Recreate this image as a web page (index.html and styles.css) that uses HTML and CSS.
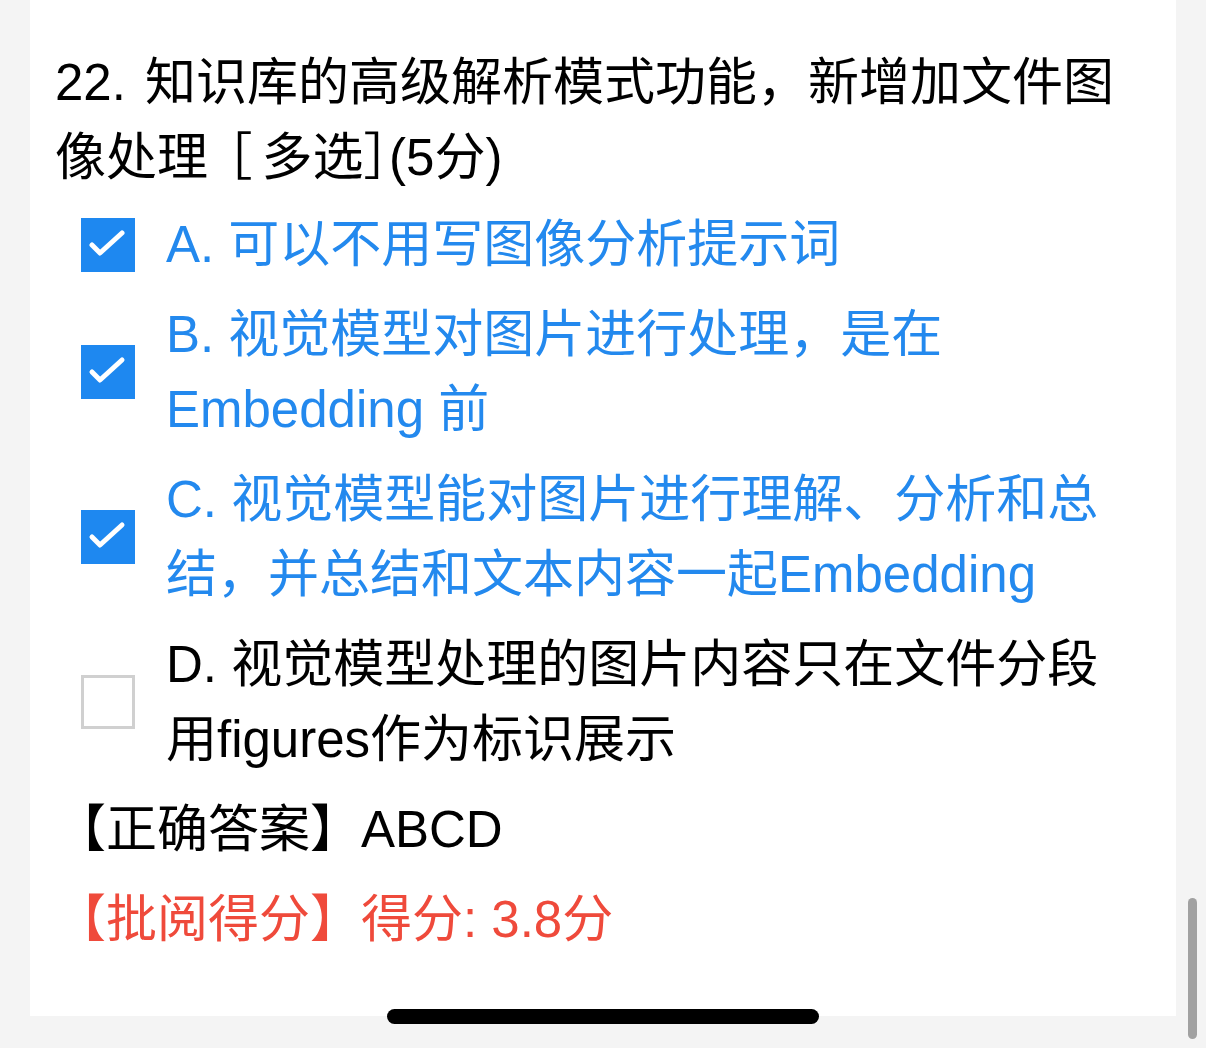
FILE: index.html
```html
<!DOCTYPE html>
<html lang="zh-CN">
<head>
<meta charset="utf-8">
<title>多选题</title>
<link rel="stylesheet" href="styles.css">
</head>
<body>
<div class="page">
  <div class="card">
    <div class="question"><span class="num">22.</span> 知识库的高级解析模式功能，新增加文件图像处理<span class="bl">［</span>多选<span class="br">］</span>(5分)</div>
    <div class="options">
      <div class="option checked">
        <span class="box"><svg viewBox="0 0 54 54" width="54" height="54"><path d="M11 27 L19 35 L41 15" fill="none" stroke="#fff" stroke-width="5" stroke-linecap="round" stroke-linejoin="round"/></svg></span>
        <span class="label">A. 可以不用写图像分析提示词</span>
      </div>
      <div class="option checked">
        <span class="box"><svg viewBox="0 0 54 54" width="54" height="54"><path d="M11 27 L19 35 L41 15" fill="none" stroke="#fff" stroke-width="5" stroke-linecap="round" stroke-linejoin="round"/></svg></span>
        <span class="label">B. 视觉模型对图片进行处理，是在Embedding 前</span>
      </div>
      <div class="option checked">
        <span class="box"><svg viewBox="0 0 54 54" width="54" height="54"><path d="M11 27 L19 35 L41 15" fill="none" stroke="#fff" stroke-width="5" stroke-linecap="round" stroke-linejoin="round"/></svg></span>
        <span class="label">C. 视觉模型能对图片进行理解、分析和总结，并总结和文本内容一起Embedding</span>
      </div>
      <div class="option">
        <span class="box"></span>
        <span class="label">D. 视觉模型处理的图片内容只在文件分段用figures作为标识展示</span>
      </div>
      <div class="answer">【正确答案】ABCD</div>
      <div class="score">【批阅得分】得分: 3.8分</div>
    </div>
  </div>
</div>
<div class="scrollbar"></div>
<div class="home-indicator"></div>
</body>
</html>
```

FILE: styles.css
```css
html, body {
  margin: 0;
  padding: 0;
}
body {
  background: #f4f4f4;
  font-family: "Liberation Sans", "Noto Sans CJK SC", sans-serif;
  font-size: 51px;
  line-height: 75px;
  color: #000;
  min-height: 1048px;
  overflow: hidden;
}
.page {
  padding-left: 30px;
  width: 1146px;
}
.card {
  background: #fff;
  padding: 45px 25px 59px 25px;
}
.question {
  margin-bottom: 12px;
}
.question .num {
  margin-right: 5px;
}
.question .bl,
.question .br {
  font-feature-settings: "halt" 1;
}
.question .bl {
  margin-left: 19px;
  margin-right: 9px;
}
.options {
  display: flex;
  flex-direction: column;
  gap: 15px;
}
.option {
  display: flex;
  align-items: center;
  padding-left: 26px;
  padding-right: 30px;
  color: #2389ee;
}
.option .box {
  flex: 0 0 auto;
  width: 54px;
  height: 54px;
  box-sizing: border-box;
  border: 3px solid #d0d0d0;
  background: #fff;
  margin-right: 31px;
}
.option.checked .box {
  border: none;
  background: #1e88f0;
}
.box svg {
  display: block;
}
.option .label {
  flex: 1 1 auto;
}
.option:not(.checked) {
  color: #000;
}
.answer {
  color: #000;
}
.score {
  color: #ef4a3b;
}
.scrollbar {
  position: fixed;
  left: 1188px;
  top: 898px;
  width: 9px;
  height: 141px;
  border-radius: 5px;
  background: #a1a1a1;
}
.home-indicator {
  position: fixed;
  left: 387px;
  top: 1009px;
  width: 432px;
  height: 15px;
  border-radius: 8px;
  background: #000;
}
```
